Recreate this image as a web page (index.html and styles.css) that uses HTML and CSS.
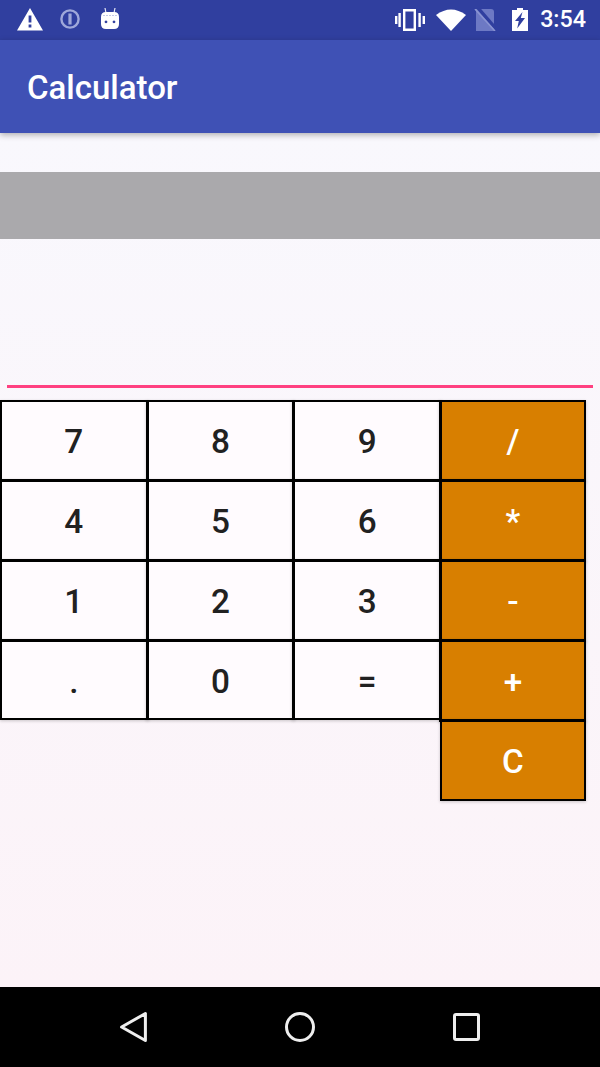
FILE: index.html
```html
<!DOCTYPE html>
<html lang="en">
<head>
<meta charset="utf-8">
<title>Calculator</title>
<link rel="stylesheet" href="styles.css">
</head>
<body>
<div class="screen">
  <header class="status">
    <div class="status-left">
      <svg class="ic-warn" width="26" height="23" viewBox="0 0 26 23"><path fill="#fff" fill-rule="evenodd" d="M13 0 L26 22.5 H0 Z M11.6 7.5 V14.5 H14.4 V7.5 Z M11.6 16.5 V19.5 H14.4 V16.5 Z"/></svg>
      <svg class="ic-info" width="20" height="20" viewBox="0 0 20 20"><circle cx="10" cy="10" r="8.6" fill="none" stroke="#9fa8da" stroke-width="2.4"/><rect x="8.4" y="4.5" width="3.2" height="11" fill="#9fa8da"/></svg>
      <svg class="ic-bot" width="22" height="24" viewBox="0 0 22 24"><path d="M6 1 L7 6 M16 1 L15 6" stroke="#e8eaf6" stroke-width="1.2" fill="none"/><path fill="#fff" fill-rule="evenodd" d="M7 5 H15 Q20 5 20 10 V17 Q20 22 15 22 H7 Q2 22 2 17 V10 Q2 5 7 5 Z M7 13.5 a1.4 1.4 0 1 0 0.01 0 Z M15 13.5 a1.4 1.4 0 1 0 0.01 0 Z"/><path d="M4 8.5 H18" stroke="#c5cae9" stroke-width="1.2" stroke-dasharray="2 1" fill="none"/></svg>
    </div>
    <div class="status-right">
      <svg class="ic-vib" width="31" height="22" viewBox="0 0 31 22"><path fill="none" stroke="#fff" stroke-width="2.4" d="M9.2 1.2 H19.8 V20.8 H9.2 Z"/><path stroke="#fff" stroke-width="2.4" fill="none" d="M4.6 4 V18 M24.6 4 V18 M1.2 7 V15 M28.8 7 V15"/></svg>
      <svg class="ic-wifi" width="30" height="22" viewBox="0 0 30 22"><path fill="#fff" d="M0 6 Q15 -5 30 6 L15 22 Z"/></svg>
      <svg class="ic-sim" width="22" height="22" viewBox="0 0 22 22"><path fill="#6d79c4" d="M2 0 H17 Q20 0 20 3 V22 H2 Z"/><path stroke="#303f9f" stroke-width="3.4" d="M4 -1 L23 21"/><path stroke="#8a94d2" stroke-width="1.6" d="M1 0 L21 22"/></svg>
      <svg class="ic-bat" width="16" height="23" viewBox="0 0 16 23"><path fill="#fff" fill-rule="evenodd" d="M5 0 H11 V2 H16 V23 H0 V2 H5 Z M10.5 4 L3 13 H6.8 L5.2 20.5 L13 10 H8.8 Z"/></svg>
      <span class="time">3:54</span>
    </div>
  </header>
  <div class="appbar"><h1 class="title">Calculator</h1></div>
  <main class="content">
    <div class="display"></div>
    <div class="input-line"></div>
    <div class="keys">
      <button class="key">7</button><button class="key">8</button><button class="key">9</button><button class="key op">/</button>
      <button class="key">4</button><button class="key">5</button><button class="key">6</button><button class="key op">*</button>
      <button class="key">1</button><button class="key">2</button><button class="key">3</button><button class="key op">-</button>
      <button class="key end">.</button><button class="key end">0</button><button class="key end">=</button><button class="key op">+</button>
      <button class="key op clear">C</button>
    </div>
  </main>
  <nav class="navbar">
    <svg width="29" height="32" viewBox="0 0 29 32"><path fill="none" stroke="#eee" stroke-width="3" stroke-linejoin="round" d="M2.6 16 L26.4 2.5 V29.5 Z"/></svg>
    <svg width="30" height="30" viewBox="0 0 30 30"><circle cx="15" cy="15" r="13.5" fill="none" stroke="#eee" stroke-width="3"/></svg>
    <svg width="28" height="28" viewBox="0 0 28 28"><rect x="2.5" y="1.5" width="24" height="25" rx="1.5" fill="none" stroke="#eee" stroke-width="3"/></svg>
  </nav>
</div>
</body>
</html>
```
FILE: styles.css
```css
* { box-sizing: border-box; }
html, body { margin: 0; padding: 0; }
body { font-family: Roboto, "Liberation Sans", sans-serif; background: #000; }
.screen { width: 600px; height: 1067px; display: flex; flex-direction: column; overflow: hidden; }
.status { height: 40px; flex: none; background: #303f9f; display: flex; justify-content: space-between; align-items: center; padding: 0 14px 0 17px; color: #fff; }
.status-left { display: flex; align-items: center; }
.ic-warn { margin-top: -2px; }
.ic-info { margin-left: 17px; margin-top: -2px; }
.ic-bot { margin-left: 19px; margin-top: -3px; }
.status-right { display: flex; align-items: center; }
.ic-wifi { margin-left: 10px; }
.ic-sim { margin-left: 8px; }
.ic-bat { margin-left: 16px; }
.time { margin-left: 12px; font-size: 23.3px; font-weight: 500; line-height: 1; }
.appbar { height: 93px; flex: none; background: #3f51b5; display: flex; align-items: center; padding: 2px 0 0 27px; box-shadow: 0 2px 6px rgba(0,0,0,.3); position: relative; z-index: 1; }
.title { margin: 0; color: #fff; font-size: 33px; font-weight: 500; line-height: 1; }
.content { flex: 1; background: linear-gradient(#f9f8fd, #fcf3f8); padding-top: 39px; }
.display { height: 67px; background: #aaa9ac; }
.input-line { height: 3px; margin: 146px 7px 0; background: #ff4081; }
.keys { display: grid; grid-template-columns: 145.67px 146.67px 146.67px 147px; grid-template-rows: 79px repeat(4, 80px); margin-top: 12px; width: 586px; }
.key { width: calc(100% + 3px); height: calc(100% + 3px); padding: 2px 0 0; border: 3px solid #000; background: #fffbfe; color: #212121; font-family: inherit; font-size: 33.3px; font-weight: 500; box-shadow: 0 1px 3px rgba(0,0,0,.2); }
.key:nth-child(-n+4) { border-top-width: 2px; }
.key:nth-child(4n+1) { border-left-width: 2px; }
.key.op { width: 100%; border-right-width: 2px; background: #d87f00; color: #fff; }
.key.end { height: calc(100% + 1px); border-bottom-width: 2px; }
.key.clear { grid-column: 4; width: calc(100% - 1px); margin-left: 1px; height: calc(100% + 2px); border-bottom-width: 2px; border-left-width: 2px; }
.navbar { height: 80px; flex: none; background: #000; display: flex; align-items: center; padding: 0 120px 0 119px; justify-content: space-between; }
```
